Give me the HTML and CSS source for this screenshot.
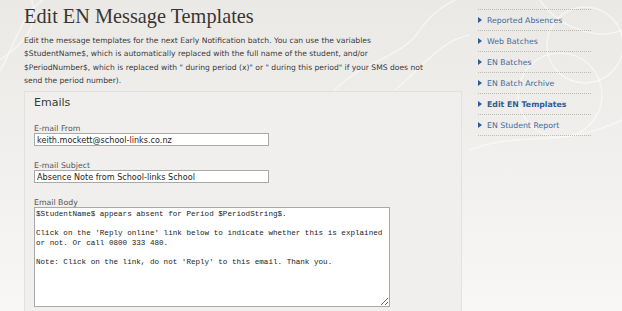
FILE: index.html
```html
<!DOCTYPE html>
<html lang="en">
<head>
  <meta charset="UTF-8" />
  <title>Edit EN Message Templates</title>
  <link rel="stylesheet" href="styles.css">
</head>
<body>
  <div class="page">
    <div class="main">
      <h1>Edit EN Message Templates</h1>
      <p class="intro">Edit the message templates for the next Early Notification batch. You can use the variables $StudentName$, which is automatically replaced with the full name of the student, and/or $PeriodNumber$, which is replaced with " during period (x)" or " during this period" if your SMS does not send the period number).</p>

      <!-- Emails panel -->
      <div class="panel">
        <h3>Emails</h3>

        <div class="form-group">
          <label for="emailFrom">E-mail From</label>
          <input type="text" id="emailFrom" value="keith.mockett@school-links.co.nz" />
        </div>

        <div class="form-group">
          <label for="emailSubject">E-mail Subject</label>
          <input type="text" id="emailSubject" value="Absence Note from School-links School" />
        </div>

        <div class="form-group">
          <label for="emailBody">Email Body</label>
          <textarea id="emailBody" spellcheck="false">$StudentName$ appears absent for Period $PeriodString$.

Click on the 'Reply online' link below to indicate whether this is explained or not. Or call 0800 333 480.

Note: Click on the link, do not 'Reply' to this email. Thank you.</textarea>
        </div>
      </div>
    </div>

    <!-- Side menu -->
    <ul class="side-menu">
      <li><a href="#">Reported Absences</a></li>
      <li><a href="#">Web Batches</a></li>
      <li><a href="#">EN Batches</a></li>
      <li><a href="#">EN Batch Archive</a></li>
      <li class="active"><a href="#">Edit EN Templates</a></li>
      <li><a href="#">EN Student Report</a></li>
    </ul>
  </div>
</body>
</html>
```

FILE: styles.css
```css
html {
  background: #f3f2f0;
}

body {
  margin: 0;
  height: 311px;
  overflow: hidden;
  font-family: "DejaVu Sans", Verdana, sans-serif;
  color: #3a3a3a;
  background-color: #efedeb;
  /* faint swirl decoration */
  background-image:
    url("data:image/svg+xml,%3Csvg xmlns='http://www.w3.org/2000/svg' width='622' height='311' fill='none' stroke='%23ffffff' stroke-opacity='0.5' stroke-width='1.5'%3E%3Cpath d='M-20 95 C 20 60 10 10 60 -10'/%3E%3Cpath d='M0 60 C 30 40 40 20 30 -5'/%3E%3Cpath d='M330 95 C 360 60 400 60 420 30 C 440 0 470 -5 480 -10'/%3E%3Cpath d='M395 90 C 420 70 440 40 470 35'/%3E%3Ccircle cx='585' cy='45' r='38'/%3E%3Ccircle cx='560' cy='95' r='42'/%3E%3Cpath d='M470 150 C 520 130 560 150 622 120'/%3E%3Cpath d='M540 0 C 560 30 600 40 622 30'/%3E%3C/svg%3E"),
    linear-gradient(to bottom, #ebe9e6 0%, #f1f0ee 55%, #f8f7f6 100%);
  background-repeat: no-repeat;
}

.page {
  display: flex;
  align-items: flex-start;
}

.main {
  width: 438px;
  padding-left: 24px;
}

h1 {
  font-family: "Liberation Serif", "Times New Roman", serif;
  font-weight: normal;
  font-size: 20.3px;
  color: #3a3633;
  margin: 5px 0 6px;
}

.intro {
  font-size: 7.6px;
  line-height: 13.3px;
  margin: 0 0 4px;
  width: 410px;
}

.panel {
  box-sizing: border-box;
  height: 221px;
  overflow: hidden;
  background: #f0efed;
  border: 1px solid #e3e1de;
  border-bottom: none;
  padding: 4px 9px 0;
}

h3 {
  font-weight: normal;
  font-size: 11px;
  line-height: 13px;
  color: #3a3a3a;
  margin: 0 0 15px;
}

.form-group {
  margin-bottom: 15px;
}

.form-group:last-child {
  margin-bottom: 0;
}

label {
  display: block;
  font-size: 7.8px;
  line-height: 9px;
  color: #555;
}

input {
  display: block;
  width: 235px;
  height: 13px;
  box-sizing: border-box;
  border: 1px solid #a9a9a9;
  background: #fff;
  padding: 0 2px;
  font-family: "DejaVu Sans", Verdana, sans-serif;
  font-size: 8.1px;
  color: #1e1e1e;
}

textarea {
  display: block;
  width: 356px;
  height: 100px;
  box-sizing: border-box;
  border: 1px solid #a9a9a9;
  background: #fff;
  padding: 2px 1px;
  font-family: "Liberation Mono", "Courier New", monospace;
  font-size: 7.6px;
  line-height: 9.6px;
  color: #222;
  resize: vertical;
}

.side-menu {
  list-style: none;
  margin: 9px 0 0 16px;
  padding: 0;
  width: 113px;
  border-top: 1px dotted #bdbab6;
}

.side-menu li {
  border-bottom: 1px dotted #bdbab6;
  height: 20px;
  display: flex;
  align-items: center;
}

.side-menu a {
  color: #3d6a9c;
  text-decoration: none;
  font-size: 7.8px;
  display: flex;
  align-items: center;
  gap: 5px;
}

.side-menu a::before {
  content: "";
  border-left: 4px solid #2f5d93;
  border-top: 3px solid transparent;
  border-bottom: 3px solid transparent;
}

.side-menu .active a {
  font-weight: bold;
  color: #2f5d93;
}
```
